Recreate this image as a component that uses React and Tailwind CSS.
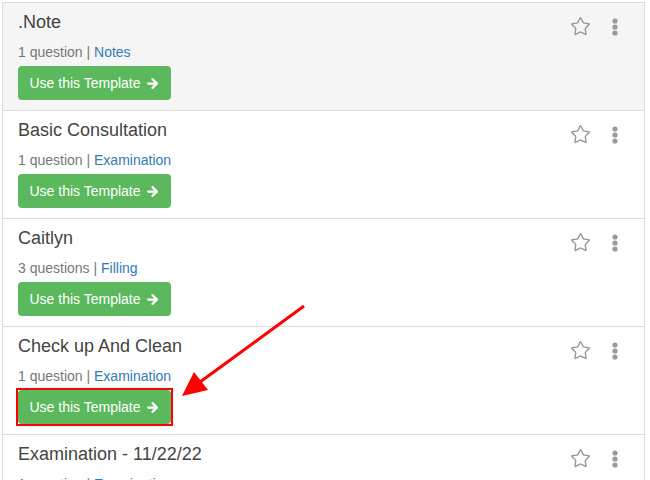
import { Star, ArrowRight } from 'lucide-react'

const templates = [
    { name: '.Note', count: '1 question', category: 'Notes', active: true },
    { name: 'Basic Consultation', count: '1 question', category: 'Examination' },
    { name: 'Caitlyn', count: '3 questions', category: 'Filling' },
    { name: 'Check up And Clean', count: '1 question', category: 'Examination', highlight: true },
    { name: 'Examination - 11/22/22', count: '1 question', category: 'Examination' },
]

function Dots() {
    return (
        <svg width="6" height="18" viewBox="0 0 6 18" className="text-[#999]">
            <circle cx="3" cy="3" r="2.6" fill="currentColor" />
            <circle cx="3" cy="9" r="2.6" fill="currentColor" />
            <circle cx="3" cy="15" r="2.6" fill="currentColor" />
        </svg>
    )
}

function UseButton() {
    return (
        <button className="flex h-[34px] w-[153px] items-center justify-center gap-[4px] rounded-[4px] bg-[#5cb85c] text-[14px] text-white">
            Use this Template
            <ArrowRight size={15} strokeWidth={3.6} />
        </button>
    )
}

function TemplateRow({ t }) {
    return (
        <div className={`relative border-t border-[#ddd] pl-[15px] pr-[15px] pt-[9px] pb-[10px] ${t.active ? 'bg-[#f5f5f5]' : 'bg-white'}`}>
            <div className="flex items-start justify-between">
                <div>
                    <h4 className="text-[18px] leading-[20px] text-[#444]">{t.name}</h4>
                    <p className="mt-[10px] text-[14px] leading-[20px] text-[#777]">
                        {t.count} | <a className="text-[#337ab7]">{t.category}</a>
                    </p>
                    {t.highlight ? (
                        <div className="-mb-[2px] -ml-[2px] mt-[2px] w-fit border-2 border-[#ff0000]">
                            <UseButton />
                        </div>
                    ) : (
                        <div className="mt-[4px]">
                            <UseButton />
                        </div>
                    )}
                </div>
                <div className="mr-[11px] mt-[4px] flex items-center gap-[21px]">
                    <Star size={21} strokeWidth={1.6} className="text-[#999]" />
                    <Dots />
                </div>
            </div>
        </div>
    )
}

export default function App() {
    return (
        <div className="relative h-[480px] overflow-hidden bg-white pl-[2px] pt-[2px] font-['Liberation_Sans',Arial,sans-serif]">
            <div className="w-[643px] border-x border-b border-[#ddd]">
                {templates.map((t) => (
                    <TemplateRow key={t.name} t={t} />
                ))}
            </div>
            <svg className="pointer-events-none absolute left-0 top-0" width="650" height="480">
                <line x1="304" y1="306" x2="200" y2="382" stroke="#ff0000" strokeWidth="3" />
                <polygon points="182,396 194,372 208,390" fill="#ff0000" />
            </svg>
        </div>
    )
}
